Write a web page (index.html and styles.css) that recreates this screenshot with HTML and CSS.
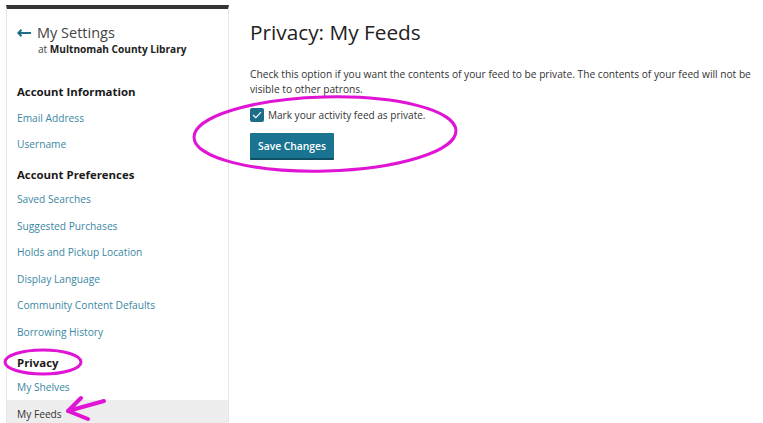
FILE: index.html
```html
<!DOCTYPE html>
<html>
<head>
<meta charset="utf-8">
<link rel="stylesheet" href="styles.css">
</head>
<body>
<div class="page">
  <aside class="sidebar">
    <div class="back">
      <span class="arrow">
        <svg width="14" height="8" viewBox="0 0 14 8"><path d="M1.5 4H14" stroke="#1b6f8c" stroke-width="2"/><path d="M4.5 0.8L1.3 4L4.5 7.2" fill="none" stroke="#1b6f8c" stroke-width="2"/></svg>
      </span>
      <div>
        <div class="title">My Settings</div>
        <div class="sub">at <b>Multnomah County Library</b></div>
      </div>
    </div>
    <div class="group first">Account Information</div>
    <a class="link">Email Address</a>
    <a class="link">Username</a>
    <div class="group">Account Preferences</div>
    <a class="link">Saved Searches</a>
    <a class="link">Suggested Purchases</a>
    <a class="link">Holds and Pickup Location</a>
    <a class="link">Display Language</a>
    <a class="link">Community Content Defaults</a>
    <a class="link">Borrowing History</a>
    <div class="group privacy">Privacy</div>
    <a class="link">My Shelves</a>
    <a class="link active">My Feeds</a>
  </aside>
  <main class="main">
    <h1>Privacy: My Feeds</h1>
    <p>Check this option if you want the contents of your feed to be private. The contents of your feed will not be visible to other patrons.</p>
    <label class="check">
      <span class="box"><svg width="10" height="8" viewBox="0 0 10 8"><path d="M1 4L3.8 6.6L9 1.2" fill="none" stroke="#fff" stroke-width="1.2"/></svg></span>
      Mark your activity feed as private.
    </label>
    <button class="btn">Save Changes</button>
  </main>
</div>
<svg class="marks" width="763" height="423" viewBox="0 0 763 423">
  <ellipse cx="325" cy="134" rx="131" ry="37" transform="rotate(-1.5 325 134)" fill="none" stroke="#e014d4" stroke-width="3"/>
  <ellipse cx="43" cy="362" rx="38" ry="12" fill="none" stroke="#e014d4" stroke-width="3"/>
  <path d="M104 401 L68 411 M68 411 L81 398 M68 411 L88 419" fill="none" stroke="#e014d4" stroke-width="4" stroke-linecap="round"/>
</svg>
</body>
</html>
```
FILE: styles.css
```css
* { box-sizing: border-box; }
html, body { margin: 0; padding: 0; background: #fff; }
body {
  font-family: "Open Sans", "Liberation Sans", sans-serif;
  color: #222;
  width: 763px;
  height: 423px;
  overflow: hidden;
  position: relative;
}
.page {
  display: flex;
  align-items: flex-start;
  padding-left: 6px;
  padding-top: 5px;
}
.sidebar {
  width: 223px;
  height: 418px;
  overflow: hidden;
  border-top: 4px solid #353535;
  border-left: 1px solid #e6e6e6;
  border-right: 1px solid #e6e6e6;
  display: flex;
  flex-direction: column;
}
.sidebar > * { flex: none; }
.back {
  display: flex;
  align-items: flex-start;
  padding: 15px 0 0 10px;
  gap: 6px;
}
.arrow { height: 18px; display: flex; align-items: center; }
.title { font-size: 14.5px; color: #444; line-height: 18px; }
.sub { font-size: 10.1px; color: #444; line-height: 14px; padding-left: 1px; }
.sub b { color: #222; }
.group {
  font-size: 11.4px;
  font-weight: 700;
  color: #1a1a1a;
  padding: 7.75px 0 2.75px 10px;
  line-height: 18px;
}
.group.first { margin-top: 27px; padding-top: 0; padding-bottom: 3.75px; }
.group.privacy { padding-top: 8.75px; padding-bottom: 1.75px; }
.link {
  font-size: 10.2px;
  color: #3a87a3;
  padding-left: 10px;
  line-height: 26.5px;
  height: 26.5px;
}
.link.active {
  background: #ededed;
  color: #333;
  line-height: 26px;
  padding-top: 1px;
  height: 40px;
}
.main { padding: 14px 0 0 21px; flex: 1; }
h1 {
  font-size: 20.8px;
  font-weight: 400;
  color: #222;
  margin: 0;
  line-height: 26px;
}
p {
  font-size: 10.2px;
  line-height: 15px;
  color: #333;
  margin: 21.5px 0 0;
  width: 512px;
}
.check {
  display: flex;
  align-items: center;
  gap: 4px;
  font-size: 10.05px;
  color: #333;
  margin-top: 10.5px;
  height: 16px;
}
.box {
  width: 14px;
  height: 14px;
  background: #1c6d8a;
  border-radius: 2px;
  display: flex;
  align-items: center;
  justify-content: center;
}
.btn {
  display: block;
  margin-top: 10px;
  background: #1a7491;
  color: #fff;
  border: none;
  border-bottom: 2px solid #0f4d62;
  font-family: inherit;
  font-size: 10.3px;
  font-weight: 600;
  height: 27px;
  width: 84px;
  padding: 0;
  border-radius: 1px;
}
.marks { position: absolute; left: 0; top: 0; pointer-events: none; }
```
